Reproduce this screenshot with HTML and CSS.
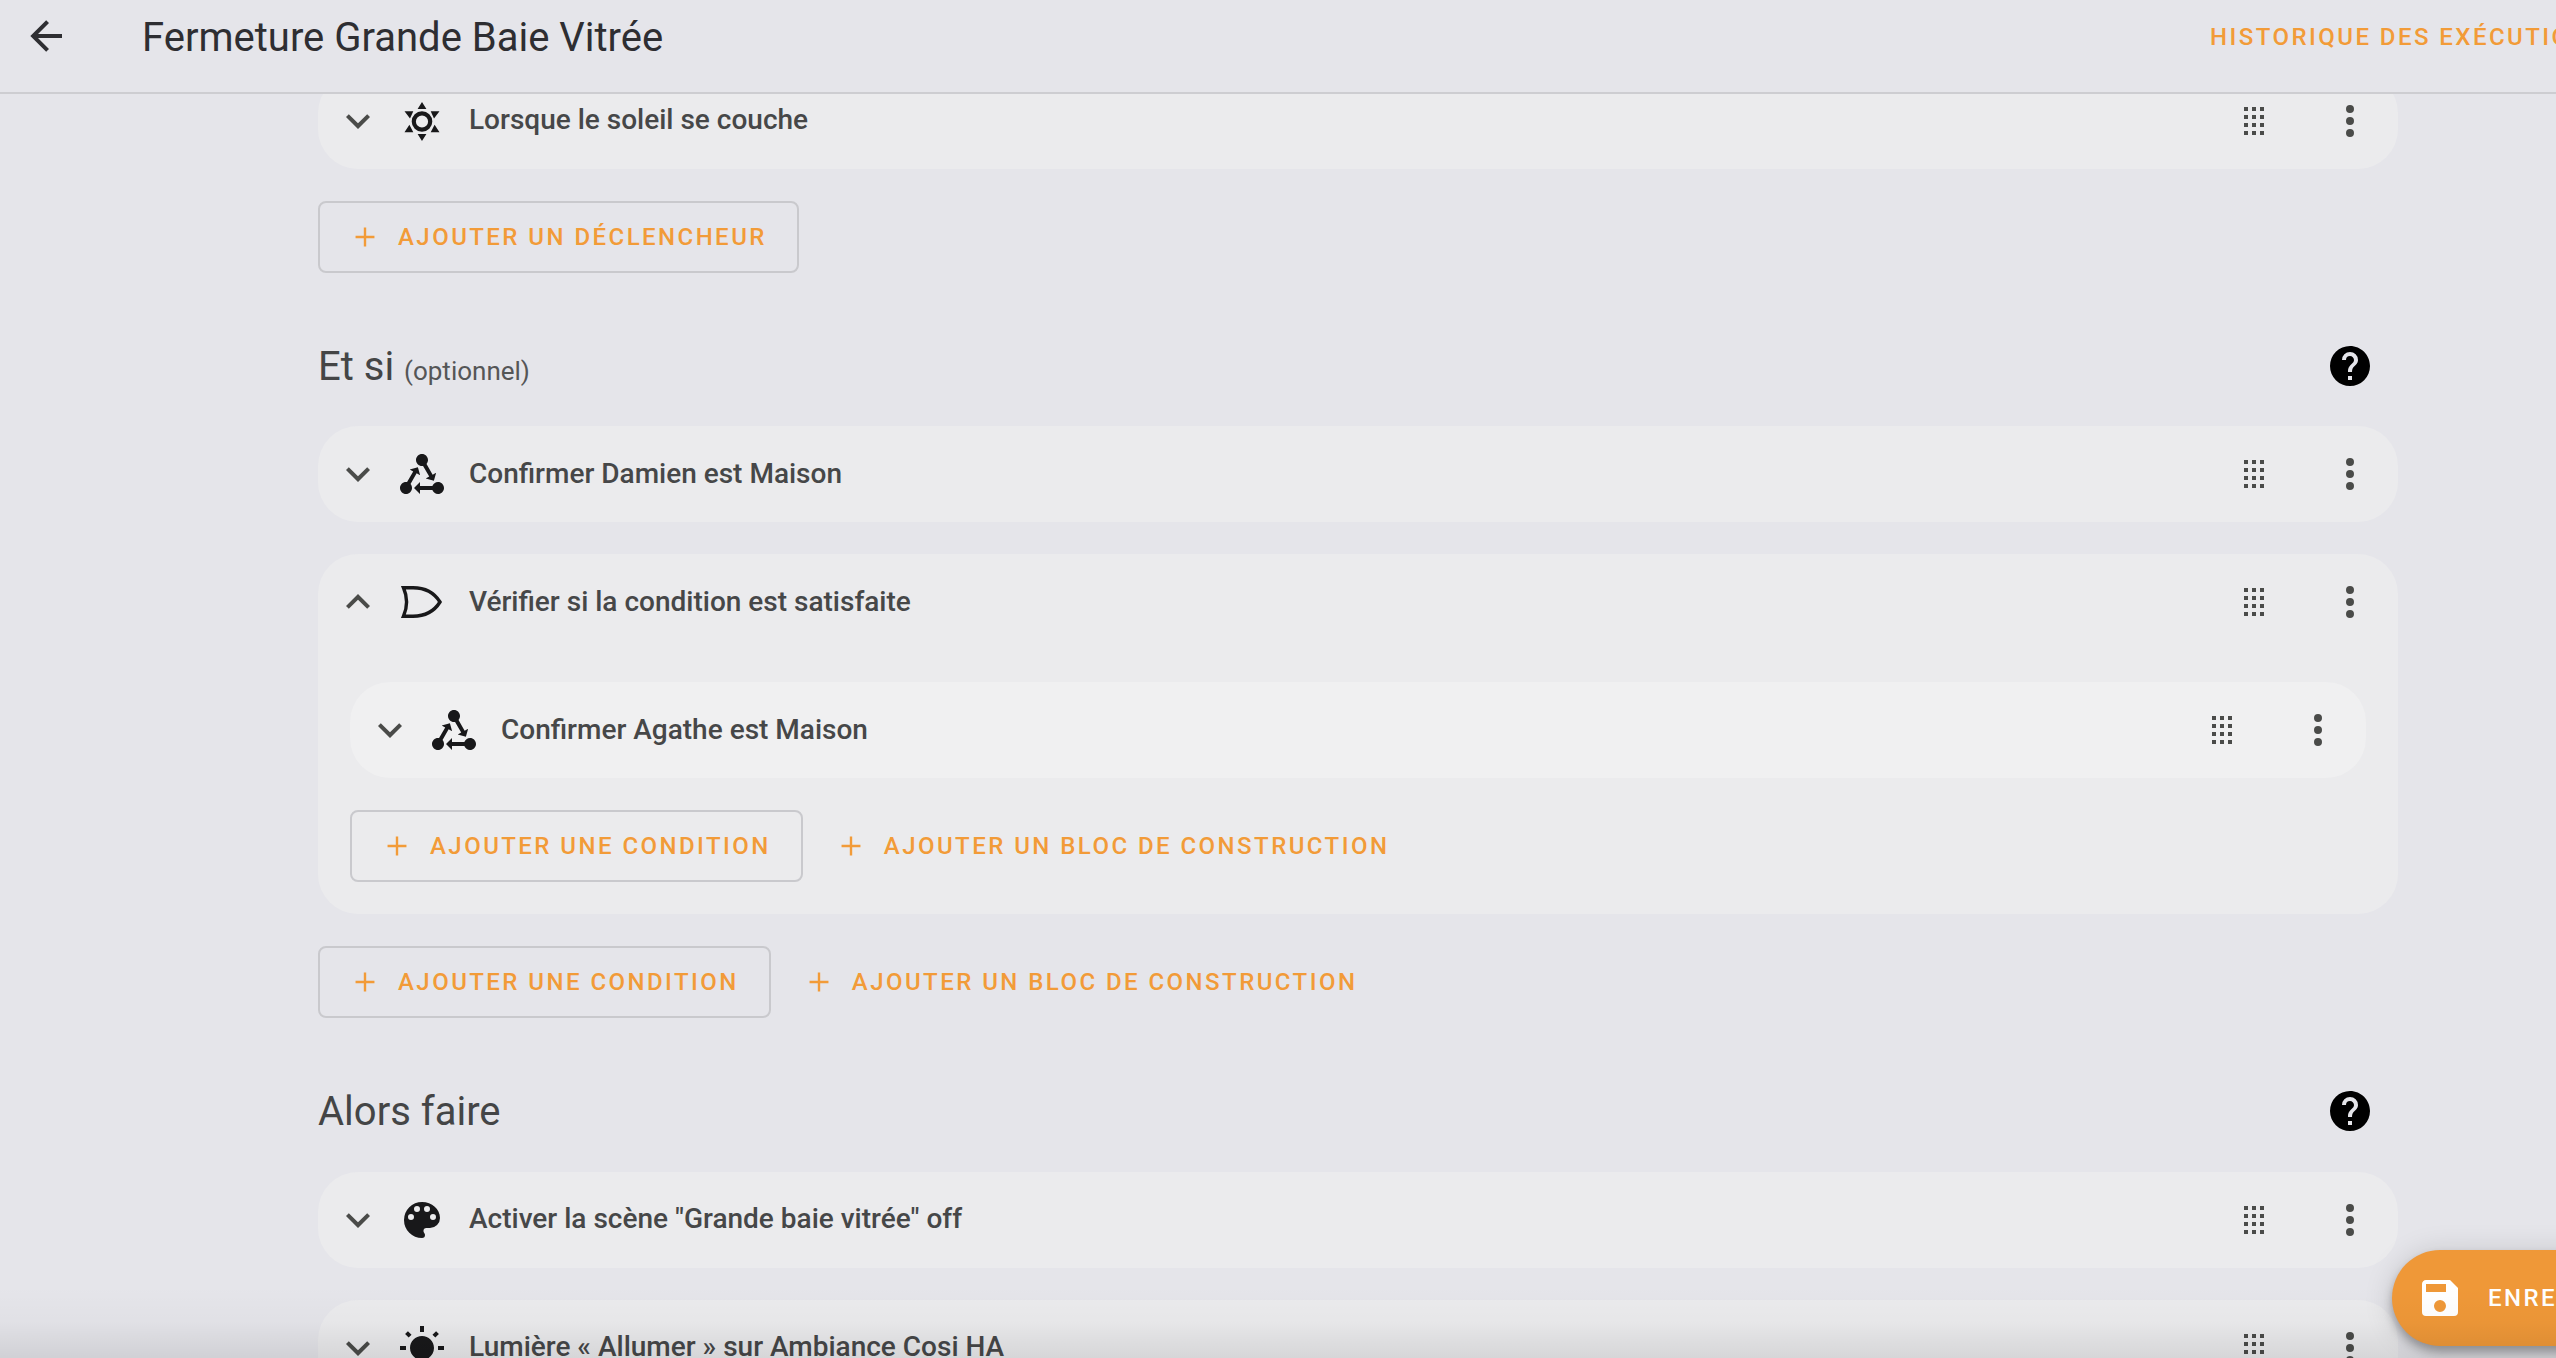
FILE: index.html
```html
<!DOCTYPE html>
<html lang="fr">
<head>
<meta charset="utf-8">
<title>Fermeture Grande Baie Vitrée</title>
<link rel="stylesheet" href="styles.css">
</head>
<body>
<svg class="defs" aria-hidden="true">
  <symbol id="i-back" viewBox="0 0 24 24"><path d="M20,11V13H8L13.5,18.5L12.08,19.92L4.16,12L12.08,4.08L13.5,5.5L8,11H20Z"/></symbol>
  <symbol id="i-down" viewBox="0 0 24 24"><path d="M7.41,8.58L12,13.17L16.59,8.58L18,10L12,16L6,10L7.41,8.58Z"/></symbol>
  <symbol id="i-up" viewBox="0 0 24 24"><path d="M7.41,15.41L12,10.83L16.59,15.41L18,14L12,8L6,14L7.41,15.41Z"/></symbol>
  <symbol id="i-dots" viewBox="0 0 24 24"><path d="M12,16A2,2 0 0,1 14,18A2,2 0 0,1 12,20A2,2 0 0,1 10,18A2,2 0 0,1 12,16M12,10A2,2 0 0,1 14,12A2,2 0 0,1 12,14A2,2 0 0,1 10,12A2,2 0 0,1 12,10M12,4A2,2 0 0,1 14,6A2,2 0 0,1 12,8A2,2 0 0,1 10,6A2,2 0 0,1 12,4Z"/></symbol>
  <symbol id="i-drag" viewBox="0 0 24 24"><path d="M7,19V17H9V19H7M11,19V17H13V19H11M15,19V17H17V19H15M7,15V13H9V15H7M11,15V13H13V15H11M15,15V13H17V15H15M7,11V9H9V11H7M11,11V9H13V11H11M15,11V9H17V11H15M7,7V5H9V7H7M11,7V5H13V7H11M15,7V5H17V7H15Z"/></symbol>
  <symbol id="i-help" viewBox="0 0 24 24"><path d="M15.07,11.25L14.17,12.17C13.45,12.89 13,13.5 13,15H11V14.5C11,13.39 11.45,12.39 12.17,11.67L13.41,10.41C13.78,10.05 14,9.55 14,9C14,7.89 13.1,7 12,7A2,2 0 0,0 10,9H8A4,4 0 0,1 12,5A4,4 0 0,1 16,9C16,9.88 15.64,10.67 15.07,11.25M13,19H11V17H13M12,2A10,10 0 0,0 2,12A10,10 0 0,0 12,22A10,10 0 0,0 22,12C22,6.47 17.5,2 12,2Z"/></symbol>
  <symbol id="i-plus" viewBox="0 0 24 24"><path d="M18.3,12.8H12.8V18.3H11.2V12.8H5.7V11.2H11.2V5.7H12.8V11.2H18.3V12.8Z"/></symbol>
  <symbol id="i-palette" viewBox="0 0 24 24"><path d="M17.5,12A1.5,1.5 0 0,1 16,10.5A1.5,1.5 0 0,1 17.5,9A1.5,1.5 0 0,1 19,10.5A1.5,1.5 0 0,1 17.5,12M14.5,8A1.5,1.5 0 0,1 13,6.5A1.5,1.5 0 0,1 14.5,5A1.5,1.5 0 0,1 16,6.5A1.5,1.5 0 0,1 14.5,8M9.5,8A1.5,1.5 0 0,1 8,6.5A1.5,1.5 0 0,1 9.5,5A1.5,1.5 0 0,1 11,6.5A1.5,1.5 0 0,1 9.5,8M6.5,12A1.5,1.5 0 0,1 5,10.5A1.5,1.5 0 0,1 6.5,9A1.5,1.5 0 0,1 8,10.5A1.5,1.5 0 0,1 6.5,12M12,3A9,9 0 0,0 3,12A9,9 0 0,0 12,21A1.5,1.5 0 0,0 13.5,19.5C13.5,19.11 13.35,18.76 13.11,18.5C12.88,18.23 12.73,17.88 12.73,17.5A1.5,1.5 0 0,1 14.23,16H16A5,5 0 0,0 21,11C21,6.58 16.97,3 12,3Z"/></symbol>
  <symbol id="i-bulb" viewBox="0 0 24 24"><path d="M3.55 19.09L4.96 20.5L6.76 18.71L5.34 17.29M12 6C8.69 6 6 8.69 6 12S8.69 18 12 18 18 15.31 18 12C18 8.68 15.31 6 12 6M20 13H23V11H20M17.24 18.71L19.04 20.5L20.45 19.09L18.66 17.29M20.45 5L19.04 3.6L17.24 5.39L18.66 6.81M13 1H11V4H13M6.76 5.39L4.96 3.6L3.55 5L5.34 6.81L6.76 5.39M1 13H4V11H1M13 23H11V20H13"/></symbol>
  <symbol id="i-state" viewBox="0 0 24 24"><path d="M6.27 17.05C6.72 17.58 7 18.25 7 19C7 20.66 5.66 22 4 22S1 20.66 1 19 2.34 16 4 16C4.18 16 4.36 16 4.53 16.05L7.6 10.69L5.86 9.7L9.95 8.58L11.07 12.67L9.33 11.68L6.27 17.05M20 16C18.7 16 17.6 16.84 17.18 18H11V16L8 19L11 22V20H17.18C17.6 21.16 18.7 22 20 22C21.66 22 23 20.66 23 19S21.66 16 20 16M12 8C12.18 8 12.36 8 12.53 7.95L15.6 13.31L13.86 14.3L17.95 15.42L19.07 11.33L17.33 12.32L14.27 6.95C14.72 6.42 15 5.75 15 5C15 3.34 13.66 2 12 2S9 3.34 9 5 10.34 8 12 8Z"/></symbol>
  <symbol id="i-or" viewBox="0 0 48 48"><path class="or-line" d="M5.5,9.8H15C27,9.8 36.5,15.2 42,24C36.5,32.8 27,38.2 15,38.2H5.5C9.5,29 9.5,19 5.5,9.8Z"/></symbol>
  <symbol id="i-sun" viewBox="0 0 48 48"><path fill-rule="evenodd" d="M24,14.2a10.3,10.3 0 1,0 0,20.6a10.3,10.3 0 1,0 0,-20.6ZM24,18.4a6.1,6.1 0 1,1 0,12.2a6.1,6.1 0 1,1 0,-12.2Z"/><path d="M24,5L28.4,12H19.6ZM24,44L28.4,37H19.6ZM6.5,14.3H15.3L12,21.6ZM41.5,14.3H32.7L36,21.6ZM6.5,35.2H15.3L11.4,27.7ZM41.5,35.2H32.7L36.6,27.7Z"/></symbol>
  <symbol id="i-save" viewBox="0 0 24 24"><path d="M15,9H5V5H15M12,19A3,3 0 0,1 9,16A3,3 0 0,1 12,13A3,3 0 0,1 15,16A3,3 0 0,1 12,19M17,3H5C3.89,3 3,3.9 3,5V19A2,2 0 0,0 5,21H19A2,2 0 0,0 21,19V7L17,3Z"/></symbol>
</svg>

<header class="topbar">
  <svg class="icon back"><use href="#i-back"/></svg>
  <div class="title">Fermeture Grande Baie Vitrée</div>
  <div class="history">HISTORIQUE DES EXÉCUTIONS</div>
</header>

<main class="content">
  <section class="card">
    <div class="row">
      <svg class="icon chev"><use href="#i-down"/></svg>
      <svg class="icon lead"><use href="#i-sun"/></svg>
      <span class="label">Lorsque le soleil se couche</span>
      <span class="act"><svg class="icon tool"><use href="#i-drag"/></svg></span>
      <span class="act"><svg class="icon tool"><use href="#i-dots"/></svg></span>
    </div>
  </section>
  <div class="actions">
    <button class="btn outlined"><svg class="icon plus"><use href="#i-plus"/></svg>AJOUTER UN DÉCLENCHEUR</button>
  </div>

  <div class="heading">
    <h2>Et si <small>(optionnel)</small></h2>
    <svg class="icon help"><use href="#i-help"/></svg>
  </div>
  <section class="card">
    <div class="row">
      <svg class="icon chev"><use href="#i-down"/></svg>
      <svg class="icon lead"><use href="#i-state"/></svg>
      <span class="label">Confirmer Damien est Maison</span>
      <span class="act"><svg class="icon tool"><use href="#i-drag"/></svg></span>
      <span class="act"><svg class="icon tool"><use href="#i-dots"/></svg></span>
    </div>
  </section>
  <section class="card expanded">
    <div class="row">
      <svg class="icon chev"><use href="#i-up"/></svg>
      <svg class="icon lead"><use href="#i-or"/></svg>
      <span class="label">Vérifier si la condition est satisfaite</span>
      <span class="act"><svg class="icon tool"><use href="#i-drag"/></svg></span>
      <span class="act"><svg class="icon tool"><use href="#i-dots"/></svg></span>
    </div>
    <div class="nested">
      <section class="card inner">
        <div class="row">
          <svg class="icon chev"><use href="#i-down"/></svg>
          <svg class="icon lead"><use href="#i-state"/></svg>
          <span class="label">Confirmer Agathe est Maison</span>
          <span class="act"><svg class="icon tool"><use href="#i-drag"/></svg></span>
          <span class="act"><svg class="icon tool"><use href="#i-dots"/></svg></span>
        </div>
      </section>
      <div class="actions">
        <button class="btn outlined"><svg class="icon plus"><use href="#i-plus"/></svg>AJOUTER UNE CONDITION</button>
        <button class="btn text"><svg class="icon plus"><use href="#i-plus"/></svg>AJOUTER UN BLOC DE CONSTRUCTION</button>
      </div>
    </div>
  </section>
  <div class="actions">
    <button class="btn outlined"><svg class="icon plus"><use href="#i-plus"/></svg>AJOUTER UNE CONDITION</button>
    <button class="btn text"><svg class="icon plus"><use href="#i-plus"/></svg>AJOUTER UN BLOC DE CONSTRUCTION</button>
  </div>

  <div class="heading">
    <h2>Alors faire</h2>
    <svg class="icon help"><use href="#i-help"/></svg>
  </div>
  <section class="card">
    <div class="row">
      <svg class="icon chev"><use href="#i-down"/></svg>
      <svg class="icon lead"><use href="#i-palette"/></svg>
      <span class="label">Activer la scène "Grande baie vitrée" off</span>
      <span class="act"><svg class="icon tool"><use href="#i-drag"/></svg></span>
      <span class="act"><svg class="icon tool"><use href="#i-dots"/></svg></span>
    </div>
  </section>
  <section class="card">
    <div class="row">
      <svg class="icon chev"><use href="#i-down"/></svg>
      <svg class="icon lead"><use href="#i-bulb"/></svg>
      <span class="label">Lumière « Allumer » sur Ambiance Cosi HA</span>
      <span class="act"><svg class="icon tool"><use href="#i-drag"/></svg></span>
      <span class="act"><svg class="icon tool"><use href="#i-dots"/></svg></span>
    </div>
  </section>
</main>

<button class="fab"><svg class="icon save"><use href="#i-save"/></svg>ENREGISTRER</button>
<div class="edge-shade"></div>
</body>
</html>
```
FILE: styles.css
```css
* { box-sizing: border-box; }
html, body { margin: 0; height: 100%; overflow: hidden; }
body {
  position: relative;
  width: 2556px;
  height: 1358px;
  background: #e5e5ea;
  font-family: Roboto, "Liberation Sans", sans-serif;
  color: #444546;
}
.defs { display: none; }
.icon { display: block; flex: none; width: 48px; height: 48px; fill: currentColor; }
.or-line { fill: none; stroke: currentColor; stroke-width: 3.4; }

.topbar {
  position: absolute;
  top: 0; left: 0; right: 0;
  z-index: 2;
  height: 94px;
  padding: 12px 0 0 22px;
  display: flex;
  align-items: flex-start;
  overflow: hidden;
  background: #e5e5ea;
  border-bottom: 2px solid #cdcdd1;
}
.back { color: #2e2e32; }
.title {
  flex: none;
  width: 2068px;
  margin: 2px 0 0 72px;
  font-size: 40px;
  line-height: 48px;
  color: #2e2e32;
}
.history {
  flex: none;
  margin-top: 1px;
  font-size: 24px;
  line-height: 48px;
  font-weight: 500;
  letter-spacing: 2.45px;
  color: #f29b38;
  white-space: nowrap;
}

.content { width: 2080px; margin-left: 318px; padding-top: 72.5px; }
.card { background: #ebebed; border-radius: 40px; margin-bottom: 32px; }
.card.inner { background: #f0f0f1; }
.row { height: 96px; display: flex; align-items: center; padding-left: 16px; }
.chev { color: #4a4b49; }
.lead { margin-left: 16px; color: #18181a; }
.label {
  flex: 1;
  margin-left: 23px;
  padding-bottom: 2px;
  font-size: 28px;
  font-weight: 500;
  color: #464748;
  white-space: nowrap;
}
.act { flex: none; width: 96px; display: flex; justify-content: center; }
.tool { color: #4a4b49; }

.nested { padding: 32px; }
.actions { display: flex; gap: 8px; }
.btn {
  display: flex;
  align-items: center;
  height: 72px;
  font: 500 24px Roboto, "Liberation Sans", sans-serif;
  letter-spacing: 2.45px;
  color: #f29b38;
  background: none;
  border-radius: 8px;
  white-space: nowrap;
}
.outlined { border: 2px solid #c9c9cd; padding: 0 30px; }
.text { border: 0; padding: 0 30px 0 25px; }
.plus { width: 36px; height: 36px; margin: 0 15px 0 -3px; }

.heading {
  height: 153.5px;
  padding-right: 24px;
  padding-top: 64px;
  display: flex;
  justify-content: space-between;
  align-items: flex-start;
}
.heading h2 {
  margin: 0;
  font-size: 40px;
  font-weight: 400;
  line-height: 60px;
  color: #444546;
}
.heading small { font-size: 26px; color: #555657; }
.help { color: #000; margin-top: 5px; }

.edge-shade {
  position: absolute;
  left: 0; right: 0; bottom: 0;
  height: 72px;
  z-index: 3;
  background: linear-gradient(to bottom, rgba(0,0,0,0), rgba(0,0,0,0.02) 50%, rgba(0,0,0,0.09));
  pointer-events: none;
}
.fab {
  position: absolute;
  left: 2392px;
  top: 1250px;
  z-index: 2;
  height: 96px;
  width: 420px;
  padding: 0 0 0 24px;
  display: flex;
  align-items: center;
  gap: 24px;
  border: 0;
  border-radius: 48px;
  background: #ef9838;
  color: #fff;
  font: 500 24px Roboto, "Liberation Sans", sans-serif;
  letter-spacing: 2.45px;
  box-shadow: 0 6px 10px rgba(0,0,0,.28), 0 2px 30px rgba(0,0,0,.14);
}
```
